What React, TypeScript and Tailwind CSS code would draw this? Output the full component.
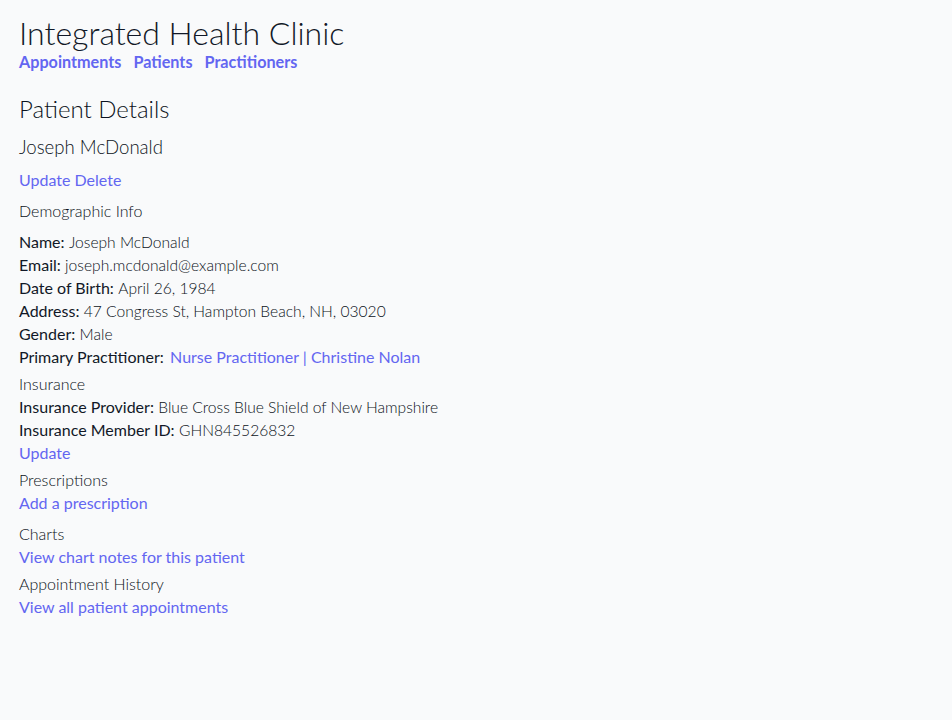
import React from "react";

const L = "text-[#6366f1]";

function Row({ label, children }: { label: string; children: React.ReactNode }) {
  return (
    <div className="h-[23px] leading-[23px]">
      <span className="font-normal text-[#111827]">{label}:</span>{" "}
      <span className="text-[15.6px] font-light">{children}</span>
    </div>
  );
}

export default function App() {
  return (
    <div className="min-h-[720px] bg-[#f9fafb] px-[19px] pt-[13px] font-['Lato',sans-serif] text-[16px] font-light text-[#0b1220]">
      <h1 className="text-[32px] leading-[40px] font-light text-[#111827]">Integrated Health Clinic</h1>
      <nav className="flex gap-[12px] text-[16.2px] leading-[18px] font-bold text-[#6366f1]">
        <a>Appointments</a>
        <a>Patients</a>
        <a>Practitioners</a>
      </nav>
      <h2 className="mt-[23px] text-[24px] leading-[30px] font-light">Patient Details</h2>
      <h3 className="mt-[11px] text-[18.6px] leading-[24px] font-light">Joseph McDonald</h3>
      <div className={`mt-[9px] h-[23px] leading-[23px] font-normal ${L}`}>Update Delete</div>
      <div className="mt-[8px] h-[23px] leading-[23px]">Demographic Info</div>
      <div className="mt-[8px]">
        <Row label="Name">Joseph McDonald</Row>
        <Row label="Email">joseph.mcdonald@example.com</Row>
        <Row label="Date of Birth">April 26, 1984</Row>
        <Row label="Address">47 Congress St, Hampton Beach, NH, 03020</Row>
        <Row label="Gender">Male</Row>
        <div className="h-[23px] leading-[23px]">
          <span className="font-normal text-[#111827]">Primary Practitioner:</span>{" "}
          <span className={`ml-[2px] font-normal ${L}`}>Nurse Practitioner | Christine Nolan</span>
        </div>
      </div>
      <div className="mt-[4px] h-[23px] leading-[23px]">Insurance</div>
      <Row label="Insurance Provider">Blue Cross Blue Shield of New Hampshire</Row>
      <Row label="Insurance Member ID">GHN845526832</Row>
      <div className={`h-[23px] leading-[23px] font-normal ${L}`}>Update</div>
      <div className="mt-[4px] h-[23px] leading-[23px]">Prescriptions</div>
      <div className={`h-[23px] leading-[23px] font-normal ${L}`}>Add a prescription</div>
      <div className="mt-[8px] h-[23px] leading-[23px]">Charts</div>
      <div className={`h-[23px] leading-[23px] font-normal ${L}`}>View chart notes for this patient</div>
      <div className="mt-[4px] h-[23px] leading-[23px]">Appointment History</div>
      <div className={`h-[23px] leading-[23px] font-normal ${L}`}>View all patient appointments</div>
    </div>
  );
}
